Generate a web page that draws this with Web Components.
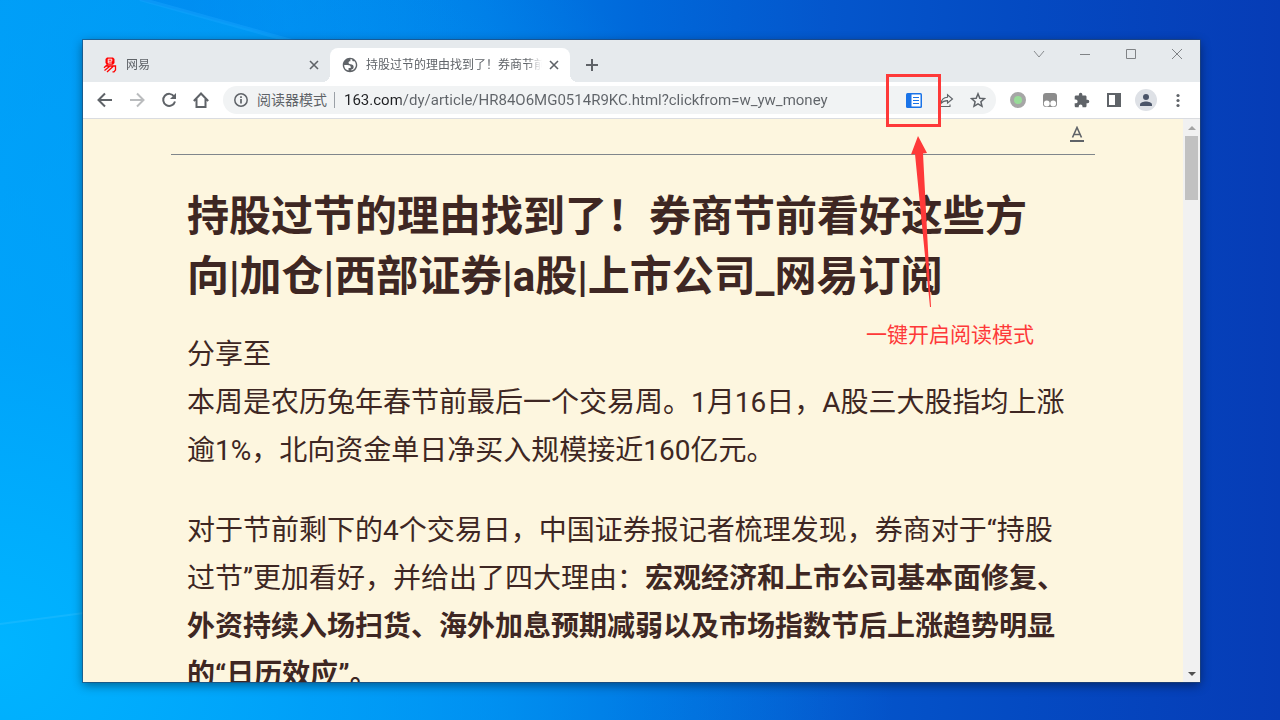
<!DOCTYPE html>
<html lang="zh-CN">
<head>
<meta charset="utf-8">
<meta name="viewport" content="width=device-width, initial-scale=1">
<title>网易</title>
<style>
  body {
    margin: 0;
    font-family: "Open Sans", "Noto Sans CJK SC", sans-serif;
    font-size: 12px;
    color: #5f6368;
  }
  svg {
    display: block;
  }
</style>
</head>
<body>
<desk-top>
  <browser-window>
    <browser-tab slot="tabs" label="网易">
      <svg width="16" height="16" viewBox="0 0 16 16" fill="none" stroke="#f00" stroke-width="1.3">
        <path d="M5 .5h6l1.500 1.500v4l-1.500 1.700h-6l-1.500-1.700v-4z" fill="#f00" stroke="none" />
        <path d="M6.200 4.200h3.600v-2h-3.600v3.800h3.600" stroke="#fff" stroke-width=".9" />
        <path d="M5.500 7.500L2 10.800M4 9h9.500v4l-1.500 1.800h-1.500M7.500 9.500L2.500 13.500M11 9.500L5 15" />
      </svg>
    </browser-tab>
    <browser-tab slot="tabs" label="持股过节的理由找到了！券商节前看好这些方向" active>
      <svg width="16" height="16" viewBox="1 1 22 22">
        <path d="M12 2C6.480 2 2 6.480 2 12s4.480 10 10 10 10-4.480 10-10S17.520 2 12 2zM4 12h4.400c3.400 0 4.900 1.300 4.600 4h-3v3.700A8 8 0 0 1 4 12zm10 7.700V18c1.800 0 3-1.300 3-3.200 0-2.500-1.500-3.800-4.500-3.800C11 11 10 10.200 10 9c0-1.600 1-2 2.500-2V4c.9 0 1.800.2 2.600.500C15 6 15.500 7 17 7h1.300A8 8 0 0 1 14 19.700z" fill="#5f6368" fill-rule="evenodd" />
      </svg>
    </browser-tab>

    <tool-bar slot="toolbar"></tool-bar>

    <reader-page slot="page">
      <h1 slot="title">持股过节的理由找到了！券商节前看好这些方向|加仓|西部证券|a股|上市公司_网易订阅</h1>
      <p>分享至<br>本周是农历兔年春节前最后一个交易周。1月16日，A股三大股指均上涨逾1%，北向资金单日净买入规模接近160亿元。</p>
      <p>对于节前剩下的4个交易日，中国证券报记者梳理发现，券商对于“持股过节”更加看好，并给出了四大理由：<strong>宏观经济和上市公司基本面修复、外资持续入场扫货、海外加息预期减弱以及市场指数节后上涨趋势明显的“日历效应”。</strong></p>
    </reader-page>
  </browser-window>
</desk-top>

<script>
// Attaches an open shadow root with the given markup
class BaseElement extends HTMLElement {
  render(html) {
    if (!this.shadowRoot) {
      this.attachShadow({ mode: 'open' });
    }
    this.shadowRoot.innerHTML = html;
  }
}

class DeskTop extends BaseElement {
  connectedCallback() {
    this.render(`
      <style>
        :host {
          display: flex;
          position: relative;
          box-sizing: border-box;
          height: 100vh;
          padding: 40px 80px 38px 83px;
          background:
            radial-gradient(ellipse 70% 120% at 0% 90%, #00b4ff 0%, rgba(0, 166, 252, 0.7) 35%, rgba(0, 120, 230, 0) 100%),
            linear-gradient(90deg, #009cf6 0%, #0092f0 22%, #007ce6 38%, #0068da 50%, #0456cc 65%, #044ac2 80%, #063cb6 100%);
        }
        .rays {
          position: absolute;
          inset: 0;
          width: 100%;
          height: 100%;
        }
      </style>
      <svg class="rays" viewBox="0 0 1280 720" preserveAspectRatio="none" aria-hidden="true">
        <defs>
          <linearGradient id="beam" x1="0" y1="0" x2="1" y2="0">
            <stop offset="0" stop-color="#0080ee" stop-opacity="0.5" />
            <stop offset="1" stop-color="#0080ee" stop-opacity="0" />
          </linearGradient>
        </defs>
        <path d="M140 0L290 40H480V0z" fill="url(#beam)" />
        <path d="M140 -1L295 42" stroke="#1aa6ff" stroke-width="4" opacity="0.4" />
        <path d="M0 624L84 613" stroke="#3cc4ff" stroke-width="2" opacity="0.3" />
      </svg>
      <slot></slot>
    `);
  }
}

class BrowserWindow extends BaseElement {
  connectedCallback() {
    this.render(`
      <style>
        :host {
          display: flex;
          flex-direction: column;
          flex: 1;
          min-width: 0;
          position: relative;
          background: #fff;
          box-shadow: 0 0 0 1px rgba(40, 70, 110, 0.6), 0 3px 10px rgba(0, 0, 0, 0.45);
        }
        header {
          display: flex;
          align-items: flex-end;
          height: 42px;
          padding-left: 7px;
          background: #e6eaed;
        }
        .tabs {
          display: flex;
        }
        button {
          display: grid;
          place-items: center;
          width: 28px;
          height: 28px;
          margin: 0 0 3px 8px;
          padding: 0;
          border: 0;
          border-radius: 50%;
          background: none;
        }
        .controls {
          display: flex;
          align-self: flex-start;
          margin-left: auto;
        }
        .controls button {
          width: 46px;
          margin: 0;
        }
        svg {
          display: block;
          fill: none;
        }
      </style>
      <header>
        <div class="tabs"><slot name="tabs"></slot></div>
        <button aria-label="新标签页"><svg width="12" height="12" stroke="#5f6368" stroke-width="2"><path d="M6 0v12M0 6h12" /></svg></button>
        <div class="controls">
          <button aria-label="搜索标签页"><svg width="12" height="12" stroke="#888b8e"><path d="M1 3l5 6l5-6" /></svg></button>
          <button aria-label="最小化"><svg width="12" height="12" stroke="#808386"><path d="M1 6.500h10" /></svg></button>
          <button aria-label="最大化"><svg width="12" height="12" stroke="#808386"><path d="M1.500 1.500h9v9h-9z" /></svg></button>
          <button aria-label="关闭"><svg width="12" height="12" stroke="#808386"><path d="M1 1l10 10M11 1L1 11" /></svg></button>
        </div>
      </header>
      <slot name="toolbar"></slot>
      <slot name="page"></slot>
    `);
  }
}

class BrowserTab extends BaseElement {
  connectedCallback() {
    this.render(`
      <style>
        :host {
          display: flex;
          align-items: center;
          position: relative;
          box-sizing: border-box;
          width: 240px;
          height: 34px;
          gap: 8px;
          padding: 0 8px 0 12px;
          border-radius: 8px 8px 0 0;
        }
        :host([active]) {
          background: #fff;
        }
        /* Outward curves at the foot of the active tab */
        :host([active])::before,
        :host([active])::after {
          content: "";
          position: absolute;
          bottom: 0;
          left: -8px;
          width: 8px;
          height: 8px;
          background: radial-gradient(circle at 0 0, transparent 8px, #fff 8px);
        }
        :host([active])::after {
          left: 100%;
          background: radial-gradient(circle at 100% 0, transparent 8px, #fff 8px);
        }
        a {
          flex: 1;
          min-width: 0;
          overflow: hidden;
          white-space: nowrap;
          line-height: 20px;
          color: #5f6368;
          text-decoration: none;
          -webkit-mask-image: linear-gradient(90deg, #000 calc(100% - 16px), transparent);
          mask-image: linear-gradient(90deg, #000 calc(100% - 16px), transparent);
        }
        button {
          display: grid;
          place-items: center;
          width: 16px;
          height: 16px;
          margin-left: -4px;
          padding: 0;
          border: 0;
          background: none;
        }
      </style>
      <slot></slot>
      <a href="#">${this.getAttribute('label')}</a>
      <button aria-label="关闭标签页">
        <svg width="10" height="10" stroke="#5f6368" stroke-width="1.600"><path d="M1 1l8 8M9 1l-8 8" /></svg>
      </button>
    `);
  }
}

class ToolButton extends BaseElement {
  connectedCallback() {
    this.render(`
      <style>
        :host {
          display: block;
          position: relative;
          flex: none;
        }
        button {
          display: grid;
          place-items: center;
          width: 32px;
          height: 28px;
          padding: 0;
          border: 0;
          background: none;
        }
      </style>
      <button aria-label="${this.getAttribute('label')}"><slot></slot></button>
      <slot name="note"></slot>
    `);
  }
}

// Red frame, arrow and caption around the button it is slotted into
class CalloutNote extends BaseElement {
  connectedCallback() {
    this.render(`
      <style>
        :host {
          position: absolute;
          top: -12px;
          left: -12px;
          z-index: 2;
          color: #fe3939;
          pointer-events: none;
        }
        .frame {
          box-sizing: border-box;
          width: 55px;
          height: 53px;
          border: 3px solid;
        }
        svg {
          display: block;
          margin: 8px 0 8px 24px;
        }
        .caption {
          margin-left: -20px;
          font-size: 21px;
          line-height: 34px;
          white-space: nowrap;
        }
      </style>
      <div class="frame"></div>
      <svg width="24" height="174" fill="currentColor" aria-hidden="true">
        <path d="M8 1L17 18L13 18.500L21 172H20L5 19L1 19.500z" />
      </svg>
      <div class="caption"><slot></slot></div>
    `);
  }
}

class ToolBar extends BaseElement {
  connectedCallback() {
    this.render(`
      <style>
        :host {
          display: flex;
          align-items: center;
          position: relative;
          z-index: 1;
          height: 36px;
          gap: 6px;
          padding: 0 6px;
          background: #fff;
          border-bottom: 1px solid #dadce0;
        }
        .group {
          display: flex;
        }
        .omnibox {
          display: flex;
          align-items: center;
          flex: 1;
          min-width: 0;
          height: 28px;
          padding: 0 2px;
          border-radius: 14px;
          background: #f1f3f4;
          font-size: 14px;
        }
        label {
          flex: none;
          padding-right: 7px;
          border-right: 1px solid #9aa0a6;
          line-height: 16px;
        }
        /* Host part is darker than the path */
        input {
          flex: 1;
          min-width: 0;
          height: 28px;
          margin-left: 9px;
          padding: 0;
          border: 0;
          outline: 0;
          font: 15px Roboto, "Noto Sans CJK SC", sans-serif;
          color: transparent;
          background: linear-gradient(90deg, #202124 57px, #5f6368 57px);
          -webkit-background-clip: text;
          background-clip: text;
        }
        svg {
          display: block;
        }
      </style>
      <div class="group">
        <tool-button label="后退"><svg width="16" height="16" fill="none" stroke="#5f6368" stroke-width="2"><path d="M15 8H2M8 1.500L1.500 8L8 14.500" /></svg></tool-button>
        <tool-button label="前进"><svg width="16" height="16" fill="none" stroke="#babcbe" stroke-width="2"><path d="M1 8h13M8 1.500L14.500 8L8 14.500" /></svg></tool-button>
        <tool-button label="重新加载"><svg width="16" height="16" fill="none" stroke="#5f6368" stroke-width="2"><path d="M13.200 4.500A6 6 0 1 0 14 9.500" /><path d="M15 1v6H9z" fill="#5f6368" stroke="none" /></svg></tool-button>
        <tool-button label="主页"><svg width="16" height="16" fill="none" stroke="#5f6368" stroke-width="2"><path d="M0.800 9L8 1.500L15.200 9M3.500 7v8h9V7" /></svg></tool-button>
      </div>

      <div class="omnibox">
        <tool-button label="网站信息"><svg width="16" height="16" fill="none" stroke="#5f6368" stroke-width="1.500"><circle cx="8" cy="8" r="6.200" /><path d="M8 7v4.500M8 4.300v1.600" stroke-width="1.700" /></svg></tool-button>
        <label for="url">阅读器模式</label>
        <input id="url" type="text" spellcheck="false" value="163.com/dy/article/HR84O6MG0514R9KC.html?clickfrom=w_yw_money">
        <tool-button label="退出阅读器模式">
          <svg width="16" height="16"><rect y="1" width="16" height="15" rx="1.500" fill="#1a73e8" /><path d="M5.500 2.500H14.500v12H5.500z" fill="#fff" /><path d="M7 5.500h6M7 8.500h6M7 11.500h6" stroke="#1a73e8" /></svg>
          <callout-note slot="note">一键开启阅读模式</callout-note>
        </tool-button>
        <tool-button label="分享"><svg width="16" height="16" fill="none" stroke="#5f6368" stroke-width="1.100"><path d="M3 11.500C3.500 7.500 6 5.500 9.500 5.300V2.800L14.500 7L9.500 11V8.600C6.500 8.600 4.500 9.500 3 11.500zM2.500 12.500v2h9.500V12.500" /></svg></tool-button>
        <tool-button label="添加书签"><svg width="16" height="16" fill="none" stroke="#5f6368" stroke-width="1.500"><path d="M8 1.800l1.800 4.400 4.700.4-3.600 3.100 1.100 4.600L8 11.900l-4 2.400 1.100-4.600-3.600-3.100 4.700-.4z" /></svg></tool-button>
      </div>

      <div class="group">
        <tool-button label="扩展程序一"><svg width="16" height="16"><circle cx="8" cy="8" r="6" fill="#98dc98" stroke="#a6a6a6" stroke-width="4" /></svg></tool-button>
        <tool-button label="扩展程序二"><svg width="16" height="16"><rect x="1" y="1" width="14" height="14" rx="3" fill="#8c8c8c" /><circle cx="4.800" cy="11.500" r="2.900" fill="#fff" /><circle cx="11.200" cy="11.500" r="2.900" fill="#fff" /></svg></tool-button>
        <tool-button label="扩展程序"><svg width="16" height="16" viewBox="1 0 23 23" fill="#5f6368"><path d="M20.500 11H19V7c0-1.100-.9-2-2-2h-4V3.500a2.500 2.500 0 0 0-5 0V5H4c-1.100 0-2 .9-2 2v3.800h1.500a2.700 2.700 0 0 1 0 5.400H2V20c0 1.100.9 2 2 2h3.800v-1.500a2.700 2.700 0 0 1 5.400 0V22H17c1.100 0 2-.9 2-2v-4h1.500a2.500 2.500 0 0 0 0-5z" /></svg></tool-button>
        <tool-button label="侧边栏"><svg width="16" height="16"><path d="M1 1h14v14H1zM3 3v10h6V3z" fill="#5f6368" fill-rule="evenodd" /></svg></tool-button>
        <tool-button label="用户"><svg width="22" height="22"><circle cx="11" cy="11" r="11" fill="#dee1e6" /><circle cx="11" cy="8" r="3" fill="#4a5468" /><path d="M5 17v-1.500c0-2 3.500-3 6-3s6 1 6 3V17z" fill="#4a5468" /></svg></tool-button>
        <tool-button label="菜单"><svg width="16" height="16" fill="#5f6368"><circle cx="8" cy="3.500" r="1.600" /><circle cx="8" cy="8.500" r="1.600" /><circle cx="8" cy="13.500" r="1.600" /></svg></tool-button>
      </div>
    `);
  }
}

class ReaderPage extends BaseElement {
  connectedCallback() {
    this.render(`
      <style>
        :host {
          display: flex;
          flex: 1;
          min-height: 0;
          background: #fdf6df;
          color: #3e2723;
          font-family: Roboto, "Noto Sans CJK SC", sans-serif;
        }
        main {
          flex: 1;
          min-width: 0;
          overflow-y: auto;
          scrollbar-width: none;
        }
        article {
          max-width: 924px;
          margin: 0 auto;
        }
        .settings {
          display: flex;
          justify-content: flex-end;
          height: 35px;
          border-bottom: 1px solid #80868b;
        }
        button {
          display: grid;
          place-items: center;
          width: 36px;
          height: 30px;
          padding: 0;
          border: 0;
          background: none;
        }
        svg {
          display: block;
        }
        .text {
          padding: 32px 16px;
          font-size: 28px;
          line-height: 48px;
        }
        ::slotted(h1) {
          margin: 0 0 24px;
          font-size: 42px;
          font-weight: 700;
          line-height: 60px;
        }
        ::slotted(p) {
          margin: 0 8px 32px 0;
        }
      </style>
      <main>
        <article>
          <div class="settings">
            <button aria-label="文字设置"><svg width="16" height="16" fill="none" stroke="#5f6368" stroke-width="1.600"><path d="M3.500 11.500L8 1.500L12.500 11.500M5 8.500h6" /><path d="M1 15h14" stroke-width="2" /></svg></button>
          </div>
          <div class="text">
            <slot name="title"></slot>
            <slot></slot>
          </div>
        </article>
      </main>
      <scroll-bar></scroll-bar>
    `);
  }
}

class ScrollBar extends BaseElement {
  connectedCallback() {
    this.render(`
      <style>
        :host {
          display: flex;
          flex-direction: column;
          width: 17px;
          background: #f1f1f1;
        }
        button {
          display: grid;
          place-items: center;
          height: 17px;
          padding: 0;
          border: 0;
          background: none;
        }
        .track {
          flex: 1;
          padding: 0 2px;
        }
        .thumb {
          height: 64px;
          background: #c1c1c1;
        }
      </style>
      <button aria-label="向上滚动"><svg width="8" height="4" fill="#a3a3a3"><path d="M0 4L4 0L8 4z" /></svg></button>
      <div class="track"><div class="thumb"></div></div>
      <button aria-label="向下滚动"><svg width="8" height="4" fill="#505050"><path d="M0 0L4 4L8 0z" /></svg></button>
    `);
  }
}

customElements.define('desk-top', DeskTop);
customElements.define('browser-window', BrowserWindow);
customElements.define('browser-tab', BrowserTab);
customElements.define('tool-button', ToolButton);
customElements.define('callout-note', CalloutNote);
customElements.define('tool-bar', ToolBar);
customElements.define('scroll-bar', ScrollBar);
customElements.define('reader-page', ReaderPage);
</script>
</body>
</html>
